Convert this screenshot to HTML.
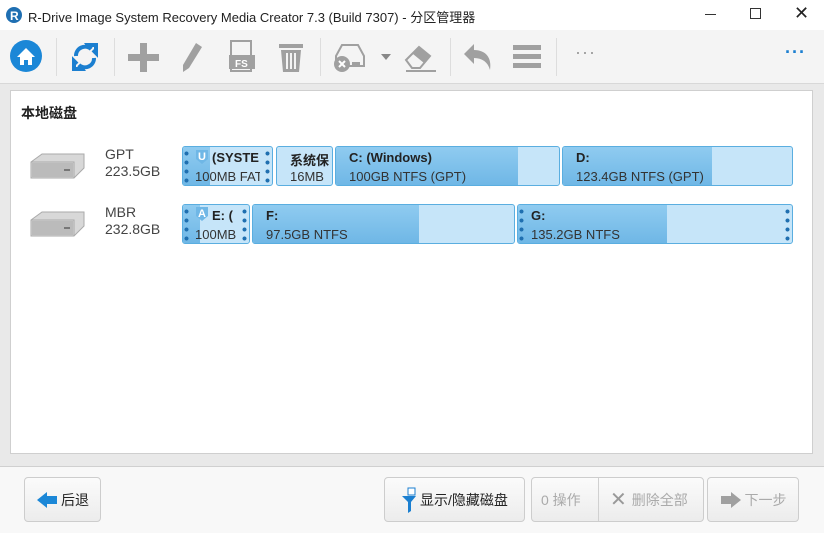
<!DOCTYPE html>
<html><head><meta charset="utf-8"><style>
*{margin:0;padding:0;box-sizing:border-box}
body{width:824px;height:533px;overflow:hidden;font-family:"Liberation Sans","Noto Sans CJK SC",sans-serif;background:#e9e9e9;position:relative;color:#222}
.abs{position:absolute}
#title{left:0;top:0;width:824px;height:30px;background:#fff;font-size:13px}
#tb{left:0;top:30px;width:824px;height:54px;background:#f4f4f4;border-bottom:1px solid #d8d8d8}
.sep{position:absolute;top:8px;width:1px;height:38px;background:#ddd}
#panel{left:10px;top:90px;width:803px;height:364px;background:#fff;border:1px solid #cfcfcf}
.p{position:absolute;height:40px;border:1px solid #5aaee0;border-radius:3px;background:#c6e5f9;overflow:hidden;font-size:13px}
.u{position:absolute;left:0;top:0;bottom:0;background:linear-gradient(#8fcbf0,#6fb7e6)}
.p b,.p span{position:absolute;white-space:nowrap}
.p b{top:3px;font-size:13px}
.p span{top:22px;color:#333}
.clip{position:absolute;top:0;bottom:0;left:0;overflow:hidden}
.dots{position:absolute;top:2px;width:5px;height:36px;background:radial-gradient(circle,#1f6fb0 1.8px,transparent 2.2px) 0 0/5px 9px repeat-y}
#bot{left:0;top:466px;width:824px;height:67px;background:#f8f8f8;border-top:1px solid #d0d0d0}
.btn{position:absolute;top:477px;height:45px;border:1px solid #cdcdcd;border-radius:4px;background:linear-gradient(#fbfbfb,#ececec);font-size:14px;display:flex;align-items:center;justify-content:center;gap:3px}
.dis{color:#aaa}
</style></head><body>
<div id="title" class="abs">
<svg class="abs" style="left:6px;top:7px" width="16" height="16"><circle cx="8" cy="8" r="8" fill="#1f6fb2"/><text x="4" y="13" fill="#fff" font-size="12" font-weight="bold" font-family="Liberation Sans">R</text></svg>
<div class="abs" style="left:28px;top:7px">R-Drive Image System Recovery Media Creator 7.3 (Build 7307) - 分区管理器</div>
<div class="abs" style="left:705px;top:14px;width:11px;height:1px;background:#333"></div>
<div class="abs" style="left:750px;top:8px;width:11px;height:11px;border:1px solid #333"></div>
<div class="abs" style="left:794px;top:3px;font-size:18px">✕</div>
</div>
<div id="tb" class="abs">
<svg class="abs" style="left:9px;top:9px" width="34" height="34"><circle cx="17" cy="17" r="16" fill="#1b87d7"/><path d="M8 18L17 9L26 18H23V26H19V21H15V26H11V18Z" fill="#fff"/></svg>
<div class="sep" style="left:56px"></div>
<svg class="abs" style="left:71px;top:11px" width="28" height="32"><path d="M5 15A9 9 0 0 1 20 8L17 4H25V12L22 9" fill="none" stroke="#1b7fd0" stroke-width="4"/><path d="M23 17A9 9 0 0 1 8 24L11 28H3V20L6 23" fill="none" stroke="#1b7fd0" stroke-width="4"/></svg>
<div class="sep" style="left:114px"></div>
<svg class="abs" style="left:127px;top:11px" width="34" height="32"><path d="M13 2h7v11h12v7H20v11h-7V20H1v-7h12z" fill="#a0a0a0"/></svg>
<svg class="abs" style="left:178px;top:10px" width="28" height="34"><path d="M18 3l6 4-13 21-6 4 0-7z" fill="#a0a0a0"/></svg>
<svg class="abs" style="left:228px;top:10px" width="28" height="34"><rect x="3" y="1" width="20" height="30" fill="#f4f4f4" stroke="#a0a0a0" stroke-width="2"/><rect x="1" y="15" width="26" height="14" fill="#a0a0a0"/><text x="7" y="27" fill="#fff" font-size="10" font-weight="bold" font-family="Liberation Sans">FS</text></svg>
<svg class="abs" style="left:277px;top:10px" width="28" height="34"><rect x="2" y="4" width="24" height="4" fill="#a0a0a0"/><path d="M4 10h20l-2 22H6z" fill="#a0a0a0"/><path d="M10 13v16M14 13v16M18 13v16" stroke="#f4f4f4" stroke-width="2"/></svg>
<div class="sep" style="left:320px"></div>
<svg class="abs" style="left:332px;top:12px" width="36" height="32"><path d="M4 14L10 3H26L32 14V24H4z" fill="#f4f4f4" stroke="#a0a0a0" stroke-width="2"/><circle cx="10" cy="22" r="8" fill="#a0a0a0"/><path d="M7 19l6 6M13 19l-6 6" stroke="#fff" stroke-width="2"/><rect x="20" y="20" width="8" height="3" fill="#a0a0a0"/></svg>
<div class="abs" style="left:381px;top:24px;border:5px solid transparent;border-top:6px solid #888"></div>
<svg class="abs" style="left:402px;top:12px" width="34" height="32"><path d="M4 18L17 5L28 14L18 26H10z" fill="#f4f4f4" stroke="#a0a0a0" stroke-width="2"/><path d="M11 12L17 5L28 14L22 21z" fill="#a0a0a0"/><rect x="4" y="28" width="30" height="2" fill="#a0a0a0"/></svg>
<div class="sep" style="left:450px"></div>
<svg class="abs" style="left:462px;top:12px" width="32" height="30"><path d="M2 12L12 2V8C24 8 30 16 28 28C26 20 20 16 12 16V22Z" fill="#a0a0a0"/></svg>
<svg class="abs" style="left:512px;top:14px" width="30" height="26"><rect x="1" y="1" width="28" height="5" fill="#a0a0a0"/><rect x="1" y="10" width="28" height="5" fill="#a0a0a0"/><rect x="1" y="19" width="28" height="5" fill="#a0a0a0"/></svg>
<div class="sep" style="left:556px"></div>
<div class="abs" style="left:575px;top:12px;color:#999;font-size:18px;letter-spacing:1px">···</div>
<div class="abs" style="left:785px;top:12px;color:#1b7fd0;font-size:18px;font-weight:bold;letter-spacing:1px">···</div>
</div>
<div id="panel" class="abs">
<div class="abs" style="left:10px;top:12px;font-size:14px;font-weight:bold">本地磁盘</div>
</div>
<svg class="abs" style="left:28px;top:150px" width="58" height="32"><path d="M3 12L14 4H56V18L46 28H3z" fill="#d8d8d8" stroke="#aaa"/><path d="M3 12H46V28" fill="none" stroke="#aaa"/><rect x="4" y="13" width="41" height="14" fill="#bbb"/><rect x="36" y="19" width="6" height="2" fill="#777"/></svg>
<svg class="abs" style="left:28px;top:208px" width="58" height="32"><path d="M3 12L14 4H56V18L46 28H3z" fill="#d8d8d8" stroke="#aaa"/><path d="M3 12H46V28" fill="none" stroke="#aaa"/><rect x="4" y="13" width="41" height="14" fill="#bbb"/><rect x="36" y="19" width="6" height="2" fill="#777"/></svg>
<div class="abs" style="left:105px;top:146px;font-size:14px;color:#444;line-height:17px">GPT<br>223.5GB</div>
<div class="abs" style="left:105px;top:204px;font-size:14px;color:#444;line-height:17px">MBR<br>232.8GB</div>

<div class="p" style="left:182px;top:146px;width:91px"><div class="u" style="width:27px"></div><div class="dots" style="left:1px"></div><div class="dots" style="left:82px"></div>
<div class="clip" style="width:77px">
<svg class="abs" style="left:12px;top:2px" width="14" height="16"><path d="M1 1h12v9l-6 5-6-5z" fill="#6fb7e6"/><text x="3" y="11" fill="#fff" font-size="11" font-weight="bold" font-family="Liberation Sans">U</text></svg>
<b style="left:29px">(SYSTE</b><span style="left:12px">100MB FAT</span></div></div>
<div class="p" style="left:276px;top:146px;width:57px"><b style="left:13px">系统保</b><span style="left:13px">16MB</span></div>
<div class="p" style="left:335px;top:146px;width:225px"><div class="u" style="width:182px"></div><b style="left:13px">C: (Windows)</b><span style="left:13px">100GB NTFS (GPT)</span></div>
<div class="p" style="left:562px;top:146px;width:231px"><div class="u" style="width:149px"></div><b style="left:13px">D:</b><span style="left:13px">123.4GB NTFS (GPT)</span></div>

<div class="p" style="left:182px;top:204px;width:68px"><div class="u" style="width:17px"></div><div class="dots" style="left:1px"></div><div class="dots" style="left:59px"></div>
<div class="clip" style="width:56px">
<svg class="abs" style="left:12px;top:1px" width="14" height="16"><path d="M1 1h12v9l-6 5-6-5z" fill="#6fb7e6"/><text x="3" y="11" fill="#fff" font-size="11" font-weight="bold" font-family="Liberation Sans">A</text></svg>
<b style="left:29px">E: (</b><span style="left:12px">100MB</span></div></div>
<div class="p" style="left:252px;top:204px;width:263px"><div class="u" style="width:166px"></div><b style="left:13px">F:</b><span style="left:13px">97.5GB NTFS</span></div>
<div class="p" style="left:517px;top:204px;width:276px"><div class="u" style="width:149px"></div><div class="dots" style="left:1px"></div><div class="dots" style="left:267px"></div><b style="left:13px">G:</b><span style="left:13px">135.2GB NTFS</span></div>

<div id="bot" class="abs"></div>
<div class="btn" style="left:24px;width:77px"><svg width="22" height="18"><path d="M1 9L11 1V5H21V13H11V17Z" fill="#1b87d7"/></svg>后退</div>
<div class="btn" style="left:384px;width:141px"><svg width="16" height="26"><path d="M1 9H15L10 15V24L7 26V15Z" fill="#1b7fd0"/><rect x="7" y="1" width="7" height="7" fill="#fff" stroke="#1b7fd0"/></svg>显示/隐藏磁盘</div>
<div class="btn dis" style="left:531px;width:173px;justify-content:flex-start"><span style="padding-left:9px;width:63px">0 操作</span><span style="width:1px;height:43px;background:#d0d0d0"></span><span style="font-size:20px;color:#999;padding:0 2px 0 8px">✕</span>删除全部</div>
<div class="btn dis" style="left:707px;width:92px"><svg width="22" height="18"><path d="M21 9L11 1V5H1V13H11V17Z" fill="#a0a0a0"/></svg>下一步</div>
</body></html>
